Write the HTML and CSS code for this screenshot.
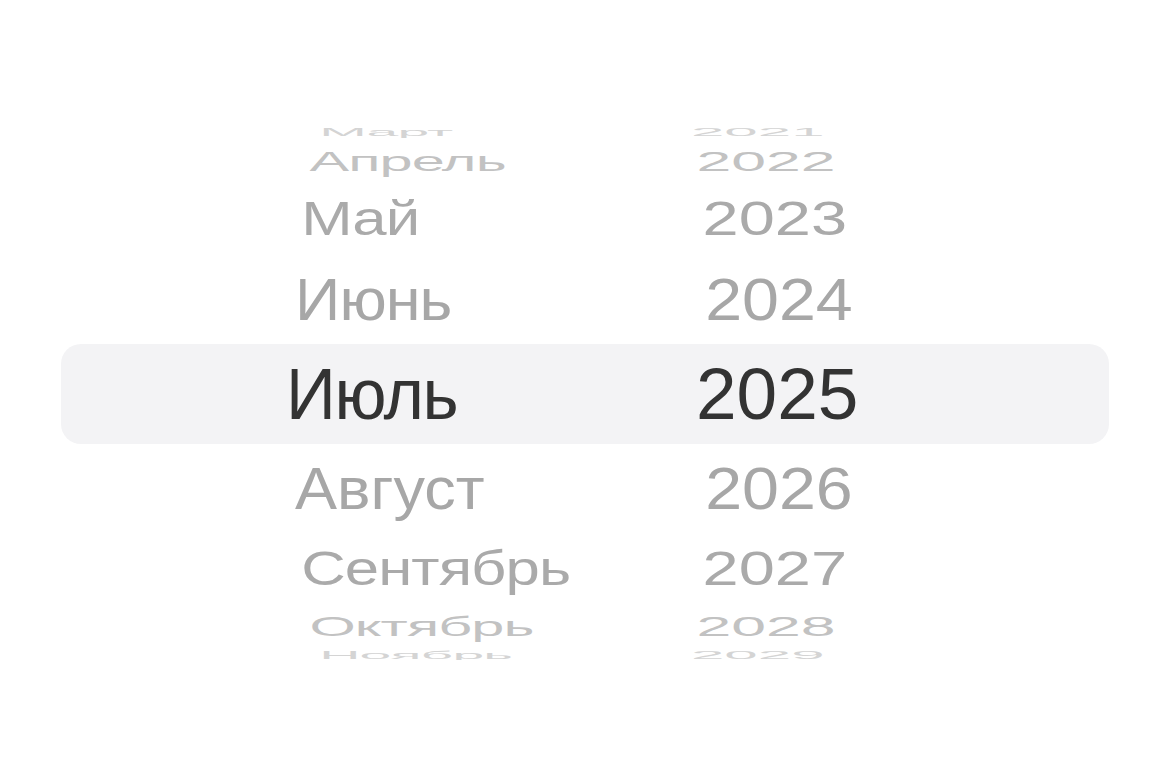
FILE: index.html
```html
<!DOCTYPE html>
<html lang="ru">
<head>
<meta charset="utf-8">
<title>Месяц и год</title>
<link rel="stylesheet" href="styles.css">
</head>
<body>
<main class="picker">
  <div class="band"></div>
  <div class="wheel">
    <div class="row r-m4"><span class="month">Март</span><span class="year">2021</span></div>
    <div class="row r-m3"><span class="month">Апрель</span><span class="year">2022</span></div>
    <div class="row r-m2"><span class="month">Май</span><span class="year">2023</span></div>
    <div class="row r-m1"><span class="month">Июнь</span><span class="year">2024</span></div>
    <div class="row current"><span class="month">Июль</span><span class="year">2025</span></div>
    <div class="row r-p1"><span class="month">Август</span><span class="year">2026</span></div>
    <div class="row r-p2"><span class="month">Сентябрь</span><span class="year">2027</span></div>
    <div class="row r-p3"><span class="month">Октябрь</span><span class="year">2028</span></div>
    <div class="row r-p4"><span class="month">Ноябрь</span><span class="year">2029</span></div>
  </div>
</main>
</body>
</html>
```

FILE: styles.css
```css
html, body {
  margin: 0;
  padding: 0;
  background: #ffffff;
}

body {
  height: 779px;
  overflow: hidden;
  font-family: "Liberation Sans", Arial, sans-serif;
}

/* wheel area: selection band and the rows share one grid cell */
.picker {
  display: grid;
  width: 1048px;
  height: 532px;
  margin: 128px 0 0 61px;
}

.band,
.wheel {
  grid-area: 1 / 1;
}

.band {
  align-self: center;
  height: 100px;
  border-radius: 20px;
  background: #f3f3f5;
}

.wheel {
  display: grid;
  overflow: hidden;
}

.row {
  grid-area: 1 / 1;
  align-self: center;
  display: flex;
  align-items: center;
  height: 100px;
  padding-left: 232px;
  font-size: 66.8px;
  line-height: 100px;
  color: #a6a6a6;
  white-space: nowrap;
  transform-origin: 524px 50px;
}

/* month names set slightly narrower than the figures */
.row .month {
  flex: 0 0 413px;
  letter-spacing: -1px;
  transform: scaleX(0.95);
  transform-origin: left center;
}

/* rows turned away on the drum: shifted, flattened, slightly shrunk */
.r-m1 { transform: translateY(-94px) scale(0.993, 0.88); color: #a7a7a7; }
.r-m2 { transform: translateY(-175px) scale(0.972, 0.71); color: #aaaaaa; }
.r-m3 { transform: translate(-2px, -232.5px) scale(0.937, 0.41); color: #c2c2c2; }
.r-m4 { transform: translate(-3px, -262px) scale(0.9, 0.17); color: #d4d4d4; }
.r-p1 { transform: translateY(95px) scale(0.993, 0.88); color: #a7a7a7; }
.r-p2 { transform: translateY(175px) scale(0.972, 0.71); color: #aaaaaa; }
.r-p3 { transform: translate(-2px, 233px) scale(0.937, 0.41); color: #c2c2c2; }
.r-p4 { transform: translate(-3px, 261px) scale(0.9, 0.17); color: #d4d4d4; }

.r-p1 .month { letter-spacing: 0; }

.row.current {
  padding-left: 225px;
  font-size: 73px;
  color: #333333;
}

.row.current .month {
  flex-basis: 410px;
  letter-spacing: -1.5px;
}
```
